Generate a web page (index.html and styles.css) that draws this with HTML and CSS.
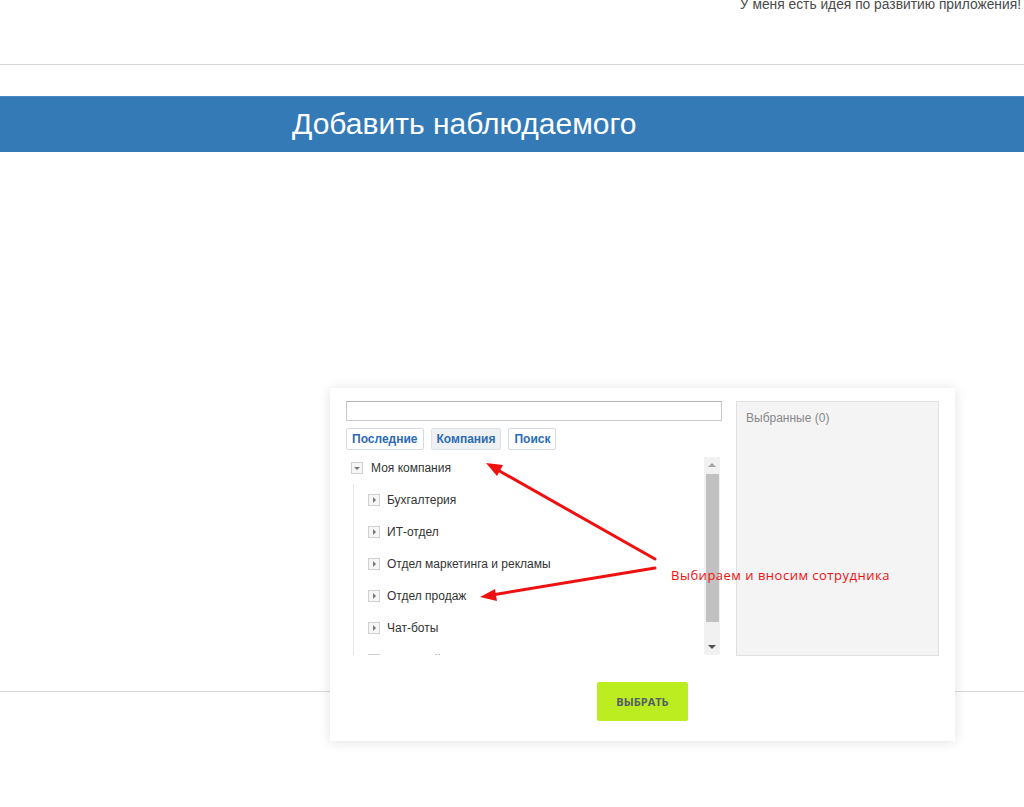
FILE: index.html
```html
<!DOCTYPE html>
<html lang="ru">
<head>
  <meta charset="UTF-8">
  <title>Добавить наблюдаемого</title>
  <link rel="stylesheet" href="styles.css">
</head>
<body>
  <div class="topbar">
    <span class="idea">У меня есть идея по развитию приложения!</span>
  </div>

  <div class="titlebar">
    <h1>Добавить наблюдаемого</h1>
  </div>

  <div class="content"></div>

  <div class="popup">
    <div class="popup-body">
      <div class="picker">
        <input type="text" class="search">
        <div class="tabs">
          <span class="tab">Последние</span>
          <span class="tab active">Компания</span>
          <span class="tab">Поиск</span>
        </div>
        <div class="tree-wrap">
          <div class="tree">
            <div class="node root"><i class="toggle open"></i>Моя компания</div>
            <div class="children">
              <div class="node"><i class="toggle"></i>Бухгалтерия</div>
              <div class="node"><i class="toggle"></i>ИТ-отдел</div>
              <div class="node"><i class="toggle"></i>Отдел маркетинга и рекламы</div>
              <div class="node"><i class="toggle"></i>Отдел продаж</div>
              <div class="node"><i class="toggle"></i>Чат-боты</div>
              <div class="node"><i class="toggle"></i>Офисный Персонал</div>
            </div>
          </div>
          <div class="scrollbar">
            <span class="arrow up"></span>
            <span class="thumb"></span>
            <span class="arrow down"></span>
          </div>
        </div>
      </div>
      <div class="selected">Выбранные (0)</div>
    </div>
    <div class="popup-foot">
      <button class="choose">ВЫБРАТЬ</button>
    </div>
  </div>

  <svg class="marks" width="1024" height="807" viewBox="0 0 1024 807">
    <g stroke="#f01010" stroke-width="3" stroke-linecap="round" fill="none">
      <line x1="655" y1="559" x2="496" y2="469"/>
      <line x1="655" y1="568" x2="492" y2="595"/>
    </g>
    <g fill="#f01010">
      <polygon points="486,463 503,465 497,476"/>
      <polygon points="480,597 495,589 497,601"/>
    </g>
  </svg>
  <div class="note">Выбираем и вносим сотрудника</div>
</body>
</html>
```

FILE: styles.css
```css
body {
  margin: 0;
  font-family: "Liberation Sans", Arial, sans-serif;
  background: white;
  color: #333;
  position: relative;
  height: 807px;
  overflow: hidden;
}
.topbar {
  height: 64px;
  border-bottom: 1px solid #d4d4d4;
  text-align: right;
  padding-right: 3px;
  overflow: hidden;
}
.idea {
  display: block;
  font-size: 13.8px;
  color: #4a4a4a;
  line-height: 14px;
  margin-top: -2px;
}
.titlebar {
  margin-top: 31px;
  height: 55px;
  background: #337ab7;
  border-top: 1px solid #4b8cc6;
}
.titlebar h1 {
  margin: 0;
  padding-left: 292px;
  font-size: 30px;
  font-weight: normal;
  line-height: 54px;
  color: white;
}
.content {
  height: 539px;
  border-bottom: 1px solid #d8d8d8;
}

/* диалог выбора */
.popup {
  position: absolute;
  left: 330px;
  top: 388px;
  width: 625px;
  height: 353px;
  box-sizing: border-box;
  padding: 13px 16px 0;
  background: white;
  box-shadow: 0 1px 12px rgba(0,0,0,0.12);
}
.popup-body {
  display: flex;
  gap: 14px;
}
.picker {
  width: 376px;
}
.search {
  display: block;
  width: 100%;
  height: 20px;
  box-sizing: border-box;
  margin: 0;
  border: 1px solid #c8c8c8;
  border-top-color: #b4b4b4;
}
.tabs {
  display: flex;
  gap: 7px;
  margin-top: 7px;
}
.tab {
  height: 22px;
  box-sizing: border-box;
  padding: 0 5px;
  line-height: 20px;
  border: 1px solid #d3dae2;
  border-radius: 2px;
  font-size: 12px;
  font-weight: bold;
  color: #2b6cb3;
}
.tab.active {
  background: #eef1f4;
  border-color: #dfe3e7;
}
.tree-wrap {
  display: flex;
  margin-top: 7px;
  height: 198px;
  overflow: hidden;
}
.tree {
  flex: 1;
  font-size: 12px;
  color: #333;
}
.node {
  display: flex;
  align-items: center;
  height: 32px;
}
.node.root {
  height: 22px;
  margin-bottom: 5px;
  padding-left: 5px;
}
.children {
  margin-left: 7px;
  border-left: 1px solid #e6e6e6;
  padding-left: 14px;
}
.toggle {
  position: relative;
  width: 10px;
  height: 10px;
  border: 1px solid #d0d0d0;
  background: #f6f6f6;
  margin-right: 7px;
}
.toggle::after {
  content: "";
  position: absolute;
  left: 4px;
  top: 2px;
  border-left: 3px solid #777;
  border-top: 3px solid transparent;
  border-bottom: 3px solid transparent;
}
.toggle.open::after {
  left: 2px;
  top: 4px;
  border-top: 3px solid #777;
  border-left: 3px solid transparent;
  border-right: 3px solid transparent;
  border-bottom: 0;
}
.node.root .toggle {
  margin-right: 8px;
}
.scrollbar {
  width: 16px;
  margin-right: 2px;
  background: #f1f1f1;
  display: flex;
  flex-direction: column;
  align-items: center;
}
.arrow {
  height: 17px;
  width: 16px;
  position: relative;
}
.arrow::after {
  content: "";
  position: absolute;
  left: 4px;
  border-left: 4px solid transparent;
  border-right: 4px solid transparent;
}
.arrow.up::after {
  top: 6px;
  border-bottom: 4px solid #a3a3a3;
}
.arrow.down::after {
  top: 7px;
  border-top: 4px solid #505050;
}
.thumb {
  width: 13px;
  height: 148px;
  background: #c1c1c1;
}
.arrow.down {
  margin-top: auto;
}
.selected {
  width: 203px;
  height: 255px;
  box-sizing: border-box;
  background: #f4f4f4;
  border: 1px solid #e0e0e0;
  padding: 9px 9px;
  font-size: 12px;
  color: #888;
}
.popup-foot {
  text-align: center;
  margin-top: 26px;
}
.choose {
  width: 91px;
  height: 39px;
  border: 0;
  border-radius: 2px;
  background: #bbed21;
  font-family: "Open Sans", sans-serif;
  font-size: 11px;
  font-weight: bold;
  color: #535c69;
}

/* пометки на скриншоте */
.marks {
  position: absolute;
  left: 0;
  top: 0;
  pointer-events: none;
}
.note {
  position: absolute;
  left: 671px;
  top: 566px;
  font-family: "Open Sans", sans-serif;
  font-size: 13px;
  color: #f01010;
  letter-spacing: 0.5px;
}
```
